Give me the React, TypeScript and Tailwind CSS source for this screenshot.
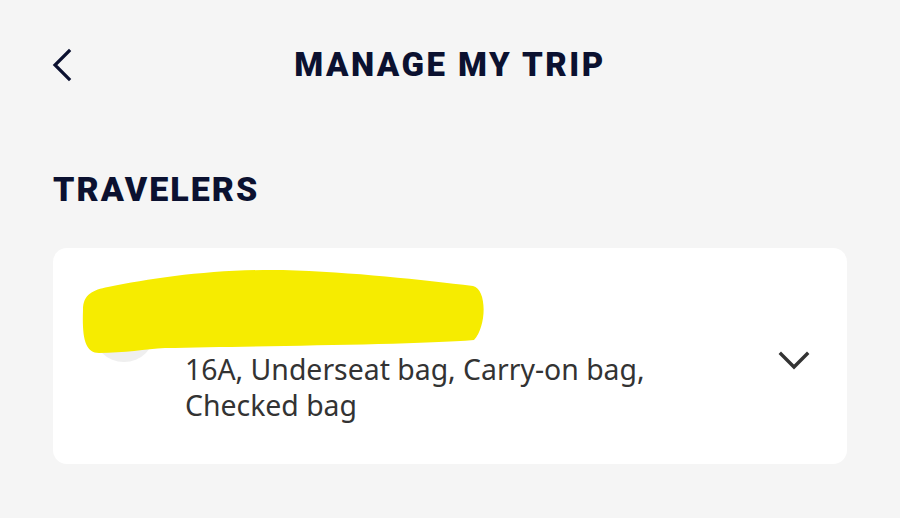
const HEADING = { fontFamily: "Roboto, Lato, sans-serif" };
const BODY = { fontFamily: "'Noto Sans', 'Open Sans', sans-serif" };

function Scribble() {
  // yellow marker over the traveler's name
  return (
    <svg
      className="absolute left-0 top-0 pointer-events-none"
      width={794}
      height={216}
      viewBox="0 0 794 216"
    >
      <path
        d="M30 62 C30 46 40 42 55 39 C100 30 160 21 230 22 C300 24 370 32 420 38 C434 41 434 78 421 92 C360 97 200 98 112 100 C92 101 72 105 46 105 C32 105 29 90 30 62 Z"
        fill="#f6ec00"
      />
    </svg>
  );
}

export default function App() {
  return (
    <div className="w-[900px] h-[518px] bg-[#f5f5f5] overflow-hidden" style={BODY}>
      {/* Header */}
      <div className="h-[129px] grid grid-cols-[1fr_auto_1fr] items-center">
        <div className="pl-[50px]">
          <svg width="24" height="34" viewBox="0 0 24 34" fill="none">
            <path
              d="M19 3 L5 17 L19 31"
              stroke="#0b1130"
              strokeWidth="3.2"
              strokeLinecap="square"
            />
          </svg>
        </div>
        <h1
          className="text-[33px] leading-none font-black tracking-[0.075em] text-[#0b1130]"
          style={HEADING}
        >
          MANAGE MY TRIP
        </h1>
        <div />
      </div>

      {/* Travelers */}
      <div className="px-[53px]">
        <h2
          className="mt-[43px] text-[34px] leading-[34px] font-black tracking-[0.06em] text-[#0b1130]"
          style={HEADING}
        >
          TRAVELERS
        </h2>

        <div className="relative mt-[42px] h-[216px] rounded-[14px] bg-white flex items-center pl-[40px] pr-[36px]">
          <div className="self-start mt-[52px] w-[62px] h-[62px] rounded-full bg-[#efefef] shrink-0" />
          <div className="ml-[30px] flex-1 self-start mt-[103px]">
            <p className="text-[28.4px] leading-[36px] text-[#333333] w-[480px]">
              16A, Underseat bag, Carry-on bag, Checked bag
            </p>
          </div>
          <svg width="34" height="24" viewBox="0 0 34 24" fill="none" className="mt-[10px]">
            <path
              d="M4 5 L17 18 L30 5"
              stroke="#333333"
              strokeWidth="3.4"
              strokeLinecap="square"
            />
          </svg>
          <Scribble />
        </div>
      </div>
    </div>
  );
}
